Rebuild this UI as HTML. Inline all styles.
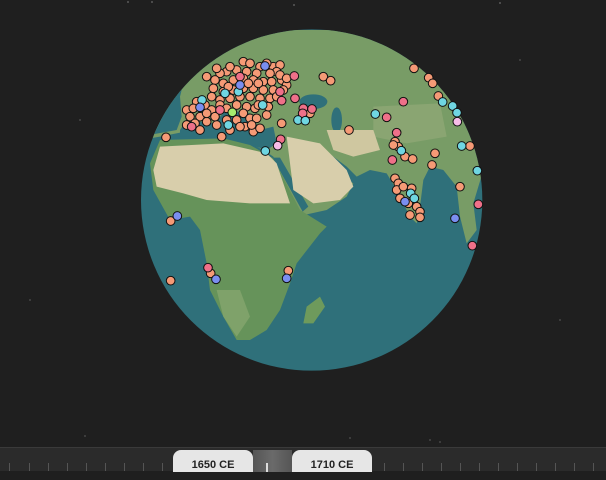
<!DOCTYPE html>
<html><head><meta charset="utf-8"><style>
html,body{margin:0;padding:0;width:606px;height:470px;overflow:hidden;background:#1f1f1f;font-family:"Liberation Sans",sans-serif}
#bar{position:absolute;left:0;top:447px;width:606px;height:23px;background:#2b2b2b;border-top:1px solid #3a3a3a}
.tick{position:absolute;top:15px;width:1px;height:8px;background:#555}
.btn{position:absolute;top:2px;height:22px;width:80px;background:#e6e6e6;border-radius:8px 8px 0 0;font-size:11px;font-weight:bold;color:#222;text-align:center;line-height:30px}
#mid{position:absolute;left:253px;top:2px;width:39px;height:22px;background:linear-gradient(90deg,#555,#6a6a6a,#555)}
#mid div{position:absolute;left:13px;top:13px;width:2px;height:9px;background:#ddd}
</style></head><body>
<svg width="606" height="447" style="position:absolute;left:0;top:0">
<g fill="#bbb"><circle cx="128" cy="2" r=".6"/><circle cx="152" cy="2" r=".6"/><circle cx="294" cy="5" r=".6"/><circle cx="500" cy="3" r=".6"/><circle cx="30" cy="300" r=".5"/><circle cx="560" cy="320" r=".5"/><circle cx="80" cy="120" r=".5"/><circle cx="520" cy="60" r=".5"/><circle cx="430" cy="440" r=".5"/><circle cx="440" cy="442" r=".5"/><circle cx="85" cy="436" r=".5"/><circle cx="350" cy="438" r=".5"/></g>
<defs><clipPath id="c"><circle cx="515" cy="510" r="512"/></clipPath></defs>
<g transform="translate(140,30) scale(0.33333)">
<circle cx="515" cy="510" r="512" fill="#2f707a"/>
<g clip-path="url(#c)">
<polygon fill="#789c66" points="0,0 1100,0 1100,300 1030,420 1000,520 1010,600 980,640 960,560 950,470 910,420 870,410 850,450 840,530 830,580 810,560 770,480 740,430 690,420 650,440 620,410 560,380 580,420 640,460 620,500 560,540 470,560 440,510 420,430 400,380 370,360 330,340 250,320 160,300 60,320 0,330"/>
<polygon fill="#2f707a" points="0,0 250,0 200,60 140,120 120,200 125,260 110,300 0,320"/>
<polygon fill="#8aa572" points="700,230 900,220 920,320 800,340 700,320"/>
<polygon fill="#2f707a" points="120,300 140,270 220,280 260,240 330,250 360,300 400,290 410,340 380,360 300,335 200,320 120,320"/>
<ellipse cx="520" cy="215" rx="42" ry="22" fill="#2f707a"/>
<ellipse cx="590" cy="270" rx="16" ry="38" fill="#2f707a"/>
<polygon fill="#2f707a" points="540,370 560,365 620,410 600,420"/>
<polygon fill="#66935a" points="60,330 250,325 330,345 400,385 480,540 560,590 540,610 470,700 450,760 420,840 380,900 330,930 290,930 250,860 210,780 200,700 180,600 150,560 90,570 40,480 30,400"/>
<polygon fill="#2f707a" points="398,383 420,383 505,530 488,545"/>
<polygon fill="#d8ceab" points="60,350 250,340 380,370 410,400 450,520 330,520 200,510 130,490 50,470 40,420"/>
<polygon fill="#d8ceab" points="440,320 540,340 620,420 640,470 600,510 520,520 460,480"/>
<polygon fill="#cfc7a0" points="560,300 700,300 720,360 640,380 580,360"/>
<polygon fill="#7fa26a" points="230,780 300,780 330,860 290,920 250,860"/>
<polygon fill="#6e9a5c" points="500,830 540,800 555,830 520,880 490,880"/>
</g>
<g stroke="#111" stroke-width="3" fill="#f59a76">
<circle cx="310" cy="95" r="13"/><circle cx="330" cy="100" r="13"/><circle cx="360" cy="110" r="13"/><circle cx="400" cy="110" r="13"/><circle cx="420" cy="105" r="13"/><circle cx="410" cy="125" r="13"/><circle cx="390" cy="130" r="13"/><circle cx="350" cy="130" r="13"/><circle cx="320" cy="125" r="13"/><circle cx="290" cy="120" r="13"/><circle cx="260" cy="125" r="13"/><circle cx="240" cy="130" r="13"/><circle cx="225" cy="150" r="13"/><circle cx="250" cy="160" r="13"/><circle cx="280" cy="150" r="13"/><circle cx="310" cy="145" r="13"/><circle cx="340" cy="150" r="13"/><circle cx="370" cy="155" r="13"/><circle cx="395" cy="155" r="13"/><circle cx="425" cy="150" r="13"/><circle cx="440" cy="165" r="13"/><circle cx="430" cy="180" r="13"/><circle cx="400" cy="180" r="13"/><circle cx="370" cy="180" r="13"/><circle cx="340" cy="175" r="13"/><circle cx="310" cy="175" r="13"/><circle cx="280" cy="180" r="13"/><circle cx="250" cy="185" r="13"/><circle cx="220" cy="175" r="13"/><circle cx="215" cy="200" r="13"/><circle cx="240" cy="210" r="13"/><circle cx="270" cy="205" r="13"/><circle cx="300" cy="200" r="13"/><circle cx="330" cy="200" r="13"/><circle cx="360" cy="205" r="13"/><circle cx="390" cy="205" r="13"/><circle cx="410" cy="200" r="13"/><circle cx="170" cy="215" r="13"/><circle cx="195" cy="225" r="13"/><circle cx="215" cy="240" r="13"/><circle cx="240" cy="225" r="13"/><circle cx="260" cy="235" r="13"/><circle cx="290" cy="225" r="13"/><circle cx="320" cy="230" r="13"/><circle cx="345" cy="235" r="13"/><circle cx="310" cy="250" r="13"/><circle cx="330" cy="265" r="13"/><circle cx="350" cy="265" r="13"/><circle cx="380" cy="255" r="13"/><circle cx="140" cy="240" r="13"/><circle cx="150" cy="260" r="13"/><circle cx="180" cy="260" r="13"/><circle cx="140" cy="285" r="13"/><circle cx="165" cy="280" r="13"/><circle cx="200" cy="275" r="13"/><circle cx="230" cy="285" r="13"/><circle cx="180" cy="300" r="13"/><circle cx="260" cy="270" r="13"/><circle cx="290" cy="270" r="13"/><circle cx="315" cy="290" r="13"/><circle cx="340" cy="305" r="13"/><circle cx="360" cy="295" r="13"/><circle cx="270" cy="300" r="13"/><circle cx="245" cy="320" r="13"/><circle cx="78" cy="322" r="13"/><circle cx="425" cy="280" r="13"/><circle cx="550" cy="140" r="13"/><circle cx="572" cy="152" r="13"/><circle cx="510" cy="250" r="13"/><circle cx="627" cy="300" r="13"/><circle cx="822" cy="115" r="13"/><circle cx="866" cy="143" r="13"/><circle cx="878" cy="160" r="13"/><circle cx="895" cy="198" r="13"/><circle cx="990" cy="348" r="13"/><circle cx="885" cy="370" r="13"/><circle cx="876" cy="405" r="13"/><circle cx="960" cy="470" r="13"/><circle cx="765" cy="335" r="13"/><circle cx="775" cy="350" r="13"/><circle cx="760" cy="345" r="13"/><circle cx="795" cy="380" r="13"/><circle cx="818" cy="387" r="13"/><circle cx="765" cy="445" r="13"/><circle cx="775" cy="460" r="13"/><circle cx="770" cy="480" r="13"/><circle cx="790" cy="470" r="13"/><circle cx="815" cy="475" r="13"/><circle cx="780" cy="505" r="13"/><circle cx="805" cy="520" r="13"/><circle cx="830" cy="530" r="13"/><circle cx="840" cy="545" r="13"/><circle cx="810" cy="555" r="13"/><circle cx="840" cy="562" r="13"/><circle cx="92" cy="573" r="13"/><circle cx="92" cy="752" r="13"/><circle cx="212" cy="730" r="13"/><circle cx="445" cy="722" r="13"/>
<circle cx="230" cy="115" r="13"/><circle cx="270" cy="110" r="13"/><circle cx="355" cy="160" r="13"/><circle cx="325" cy="160" r="13"/><circle cx="265" cy="170" r="13"/><circle cx="200" cy="250" r="13"/><circle cx="160" cy="235" r="13"/><circle cx="225" cy="260" r="13"/><circle cx="335" cy="285" r="13"/><circle cx="300" cy="290" r="13"/><circle cx="355" cy="225" r="13"/><circle cx="385" cy="230" r="13"/><circle cx="420" cy="135" r="13"/><circle cx="440" cy="145" r="13"/><circle cx="380" cy="100" r="13"/><circle cx="200" cy="140" r="13"/>
</g>
<g stroke="#111" stroke-width="3" fill="#ef7089">
<circle cx="463" cy="138" r="13"/><circle cx="465" cy="205" r="13"/><circle cx="425" cy="212" r="13"/><circle cx="420" cy="185" r="13"/><circle cx="300" cy="140" r="13"/><circle cx="490" cy="235" r="13"/><circle cx="516" cy="237" r="13"/><circle cx="488" cy="250" r="13"/><circle cx="155" cy="290" r="13"/><circle cx="422" cy="328" r="13"/><circle cx="790" cy="215" r="13"/><circle cx="740" cy="262" r="13"/><circle cx="770" cy="308" r="13"/><circle cx="757" cy="390" r="13"/><circle cx="1015" cy="523" r="13"/><circle cx="997" cy="647" r="13"/><circle cx="204" cy="713" r="13"/><circle cx="240" cy="240" r="13"/>
</g>
<g stroke="#111" stroke-width="3" fill="#6fd6e2">
<circle cx="368" cy="225" r="13"/><circle cx="186" cy="210" r="13"/><circle cx="265" cy="285" r="13"/><circle cx="474" cy="270" r="13"/><circle cx="496" cy="272" r="13"/><circle cx="376" cy="363" r="13"/><circle cx="706" cy="252" r="13"/><circle cx="908" cy="216" r="13"/><circle cx="938" cy="228" r="13"/><circle cx="951" cy="248" r="13"/><circle cx="965" cy="348" r="13"/><circle cx="1012" cy="422" r="13"/><circle cx="784" cy="362" r="13"/><circle cx="812" cy="490" r="13"/><circle cx="823" cy="505" r="13"/><circle cx="295" cy="185" r="13"/><circle cx="255" cy="190" r="13"/>
</g>
<g stroke="#111" stroke-width="3" fill="#7a8ef0">
<circle cx="375" cy="108" r="13"/><circle cx="112" cy="558" r="13"/><circle cx="228" cy="748" r="13"/><circle cx="440" cy="745" r="13"/><circle cx="945" cy="565" r="13"/><circle cx="180" cy="232" r="13"/><circle cx="300" cy="165" r="13"/><circle cx="795" cy="515" r="13"/>
</g>
<g stroke="#111" stroke-width="3"><circle cx="413" cy="347" r="13" fill="#f7bde8"/><circle cx="952" cy="275" r="13" fill="#f7bde8"/><circle cx="277" cy="247" r="13" fill="#a6ec6e"/></g>
</g>
</svg>
<div id="bar">
<div class="tick" style="left:9px"></div><div class="tick" style="left:29px"></div><div class="tick" style="left:48px"></div><div class="tick" style="left:67px"></div><div class="tick" style="left:86px"></div><div class="tick" style="left:105px"></div><div class="tick" style="left:124px"></div><div class="tick" style="left:143px"></div><div class="tick" style="left:162px"></div>
<div class="tick" style="left:384px"></div><div class="tick" style="left:403px"></div><div class="tick" style="left:422px"></div><div class="tick" style="left:441px"></div><div class="tick" style="left:460px"></div><div class="tick" style="left:479px"></div><div class="tick" style="left:498px"></div><div class="tick" style="left:517px"></div><div class="tick" style="left:536px"></div><div class="tick" style="left:555px"></div><div class="tick" style="left:574px"></div><div class="tick" style="left:593px"></div>
<div class="btn" style="left:173px">1650 CE</div>
<div id="mid"><div></div></div>
<div class="btn" style="left:292px">1710 CE</div>
</div>
</body></html>
